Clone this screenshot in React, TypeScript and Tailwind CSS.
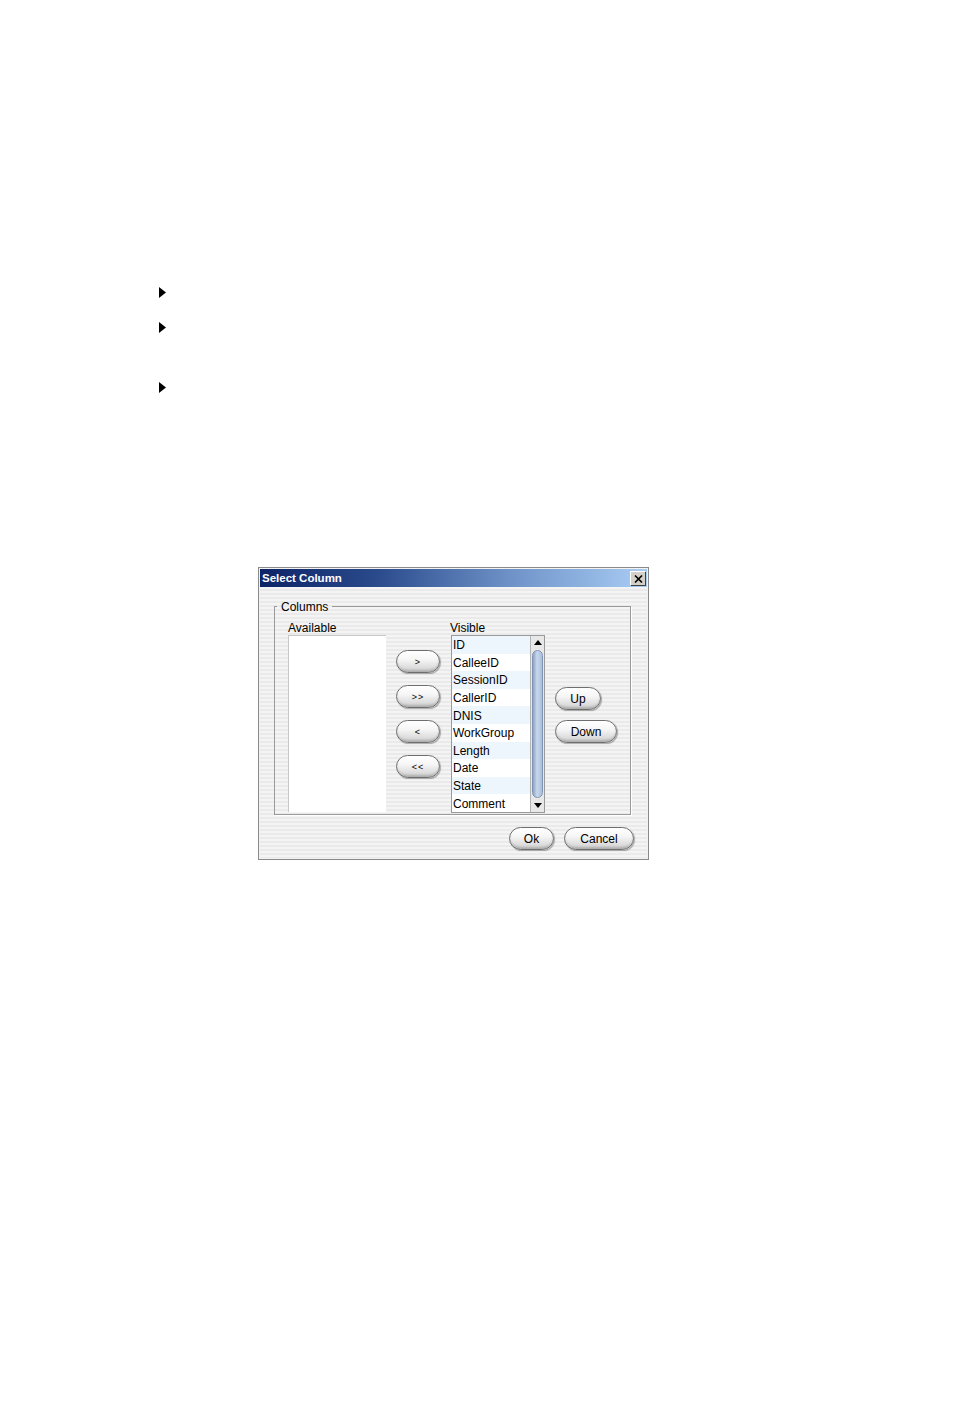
import React from 'react';

type PillProps = { label: string; width: string; small?: boolean };

// Rounded "aqua-like" Swing button
const Pill: React.FC<PillProps> = ({ label, width, small }) => (
  <button
    className={`${width} h-[23px] shrink-0 rounded-full border border-[#6e6e6e] bg-[linear-gradient(180deg,#ffffff_0%,#f6f6f6_40%,#dcdcdc_80%,#c4c4c4_100%)] shadow-[inset_0_-2px_2px_rgba(0,0,0,0.12),1px_1px_1px_rgba(0,0,0,0.3)] flex items-center justify-center pt-px text-black leading-none ${
      small ? 'text-[9px] tracking-[1px]' : 'text-[12px]'
    }`}
  >
    {label}
  </button>
);

const Bullet: React.FC<{ className: string }> = ({ className }) => (
  <svg width="7" height="11" viewBox="0 0 7 11" className={className}>
    <polygon points="0,0 7,5.5 0,11" fill="#000" />
  </svg>
);

const visible = ['ID', 'CalleeID', 'SessionID', 'CallerID', 'DNIS', 'WorkGroup', 'Length', 'Date', 'State', 'Comment'];

export default function App() {
  return (
    <div className="min-h-[1411px] w-full bg-white font-['Liberation_Sans',Arial,sans-serif] text-black">
      {/* bullets */}
      <div className="flex flex-col pt-[287px] pl-[159px]">
        <Bullet className="" />
        <Bullet className="mt-[24px]" />
        <Bullet className="mt-[49px]" />
      </div>

      {/* dialog */}
      <div className="ml-[258px] mt-[174px] w-[391px] h-[293px] border border-[#8a8a8a] p-px flex flex-col bg-[#f2f2f2]">
        <div className="h-[18px] shrink-0 flex items-center justify-between pl-[2px] pr-[2px] bg-[linear-gradient(90deg,#0c2467_0%,#2a4a8c_30%,#6f93c8_65%,#a9cdf4_100%)]">
          <span className="pt-px text-white font-bold text-[11.5px] leading-none">Select Column</span>
          <div className="w-[15px] h-[14px] bg-[#d4d0c8] border-t border-l border-white shadow-[1px_1px_0_#404040] flex items-center justify-center">
            <svg width="9" height="8" viewBox="0 0 9 8">
              <path d="M1 0.5 L8 7.5 M8 0.5 L1 7.5" stroke="#000" strokeWidth="1.6" />
            </svg>
          </div>
        </div>

        <div className="flex-1 flex flex-col bg-[repeating-linear-gradient(180deg,#f4f4f4_0px,#f4f4f4_2px,#eaeaea_2px,#eaeaea_4px)]">
          <fieldset className="mt-[11px] ml-[14px] mr-[16px] border border-[#9a9a9a] shadow-[1px_1px_0_#ffffff] pl-[2px] pb-px">
            <legend className="px-[4px] pt-[2px] text-[12px] leading-[14px]">Columns</legend>
            <div className="ml-[11px] mt-[6px] flex">
              <div className="w-[98px] flex flex-col">
                <span className="h-[15px] text-[12px] leading-[17px]">Available</span>
                <div className="h-[177px] bg-white border-l border-t border-[#c9c9c9]" />
              </div>

              <div className="ml-[10px] w-[44px] pt-[30px] flex flex-col gap-[12px]">
                <Pill label=">" width="w-[44px]" small />
                <Pill label=">>" width="w-[44px]" small />
                <Pill label="<" width="w-[44px]" small />
                <Pill label="<<" width="w-[44px]" small />
              </div>

              <div className="ml-[10px] w-[95px] flex flex-col">
                <span className="h-[15px] text-[12px] leading-[17px]">Visible</span>
                <div className="ml-px h-[178px] flex border border-[#9a9a9a] bg-white">
                  <div className="flex-1 flex flex-col">
                    {visible.map((v, i) => (
                      <div
                        key={v}
                        className={`flex-1 flex items-center pl-px pt-px text-[12px] leading-none ${
                          i % 2 === 0 ? 'bg-[#edf5fd]' : 'bg-white'
                        }`}
                      >
                        {v}
                      </div>
                    ))}
                  </div>
                  <div className="w-[14px] flex flex-col bg-[#e8e8e8] border-l border-[#b5b5b5]">
                    <div className="h-[13px] flex items-center justify-center">
                      <svg width="8" height="5" viewBox="0 0 8 5">
                        <polygon points="0,5 4,0 8,5" fill="#000" />
                      </svg>
                    </div>
                    <div className="flex-1 mx-px my-px rounded-full border border-[#7f95b6] bg-[linear-gradient(90deg,#8ca3c6_0%,#c9d8ec_45%,#aabfdc_100%)]" />
                    <div className="h-[13px] flex items-center justify-center">
                      <svg width="8" height="5" viewBox="0 0 8 5">
                        <polygon points="0,0 8,0 4,5" fill="#000" />
                      </svg>
                    </div>
                  </div>
                </div>
              </div>

              <div className="ml-[10px] pt-[67px] flex flex-col items-start gap-[10px]">
                <Pill label="Up" width="w-[46px]" />
                <Pill label="Down" width="w-[62px]" />
              </div>
            </div>
          </fieldset>

          <div className="mt-[12px] pr-[13px] flex justify-end gap-[10px]">
            <Pill label="Ok" width="w-[45px]" />
            <Pill label="Cancel" width="w-[70px]" />
          </div>
        </div>
      </div>
    </div>
  );
}
